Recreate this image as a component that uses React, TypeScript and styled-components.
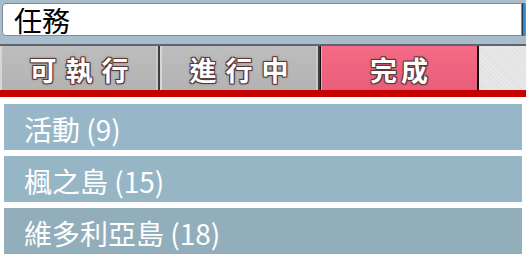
import styled, {createGlobalStyle} from 'styled-components';

const GlobalStyle = createGlobalStyle`
	html, body {
		margin: 0;
		padding: 0;
		background: #ffffff;
	}
	* {
		box-sizing: border-box;
	}
`;
const Wrapper = styled.div`
	width: 526px;
	height: 257px;
	overflow: hidden;
	font-family: 'Noto Sans CJK TC', 'Noto Sans', sans-serif;
	background-color: #ffffff;
`;
const Header = styled.div`
	display: flex;
	align-items: flex-start;
	height: 44px;
	padding: 3px 0 0 2px;
	background-color: #a8bccc;
`;
const TitleBox = styled.div`
	display: flex;
	align-items: center;
	width: 520px;
	height: 33px;
	padding-left: 11px;
	border: 1px solid #7d8d9c;
	border-radius: 4px 0 0 4px;
	background-color: #ffffff;
	color: #000000;
	font-size: 28px;
	line-height: 1;
`;
const ScrollTab = styled.div`
	flex: 1;
	height: 33px;
	border-left: 1px solid #27394a;
	background: linear-gradient(to right, #2f7fc0, #4a9ad8);
`;
const Tabs = styled.div`
	display: flex;
	height: 46px;
	border-top: 2px solid #5c6570;
	background-color: #e4e4e4;
	background-image: repeating-linear-gradient(
		45deg,
		#e0e0e0 0,
		#e0e0e0 1px,
		#e8e8e8 1px,
		#e8e8e8 3px
	);
`;
const Tab = styled.div<{$active?: boolean; $spacing: number}>`
	display: flex;
	justify-content: center;
	align-items: center;
	width: ${(props) => (props.$active ? '159px' : '160px')};
	height: 100%;
	padding-top: 2px;
	color: #ffffff;
	font-size: 27px;
	font-weight: 700;
	letter-spacing: ${(props) => props.$spacing}px;
	text-indent: ${(props) => props.$spacing}px;
	line-height: 1;
	background: ${(props) =>
		props.$active
			? 'linear-gradient(to bottom, #f56b86, #e95f7b)'
			: 'linear-gradient(to bottom, #bdbdbd, #b3b3b3)'};
	border-right: 2px solid ${(props) => (props.$active ? '#111111' : '#3e3e3e')};
	border-left: ${(props) => (props.$active ? '1px solid #111111' : 'none')};
	box-shadow: ${(props) =>
		props.$active
			? 'inset 1px 0 0 #f7a0b0'
			: 'inset 2px 0 0 #d6d6d6, inset -2px 0 0 #c9c9c9'};
	text-shadow:
		1px 1px 0 #5a3838,
		-1px -1px 0 #5a3838,
		1px -1px 0 #5a3838,
		-1px 1px 0 #5a3838,
		0 0 3px #4a2a2a;
`;
const RedLine = styled.div`
	height: 7px;
	background-color: #c80000;
`;
const List = styled.div`
	display: flex;
	flex-direction: column;
	gap: 6px;
	padding: 7px 4px 0 4px;
`;
const Row = styled.div<{$bg: string}>`
	display: flex;
	align-items: center;
	height: 46px;
	padding: 3px 0 0 20px;
	color: #ffffff;
	font-size: 28px;
	line-height: 1;
	background-color: ${(props) => props.$bg};
`;

const rows = [
	{label: '活動 (9)', bg: '#97b7c8'},
	{label: '楓之島 (15)', bg: '#96b5c5'},
	{label: '維多利亞島 (18)', bg: '#93aebb'},
];

function App() {
	return (
		<Wrapper>
			<GlobalStyle />
			<Header>
				<TitleBox>任務</TitleBox>
				<ScrollTab />
			</Header>
			<Tabs>
				<Tab $spacing={9}>可執行</Tab>
				<Tab $spacing={9}>進行中</Tab>
				<Tab $active $spacing={4}>
					完成
				</Tab>
			</Tabs>
			<RedLine />
			<List>
				{rows.map((row) => (
					<Row key={row.label} $bg={row.bg}>
						{row.label}
					</Row>
				))}
			</List>
		</Wrapper>
	);
}

export default App;
